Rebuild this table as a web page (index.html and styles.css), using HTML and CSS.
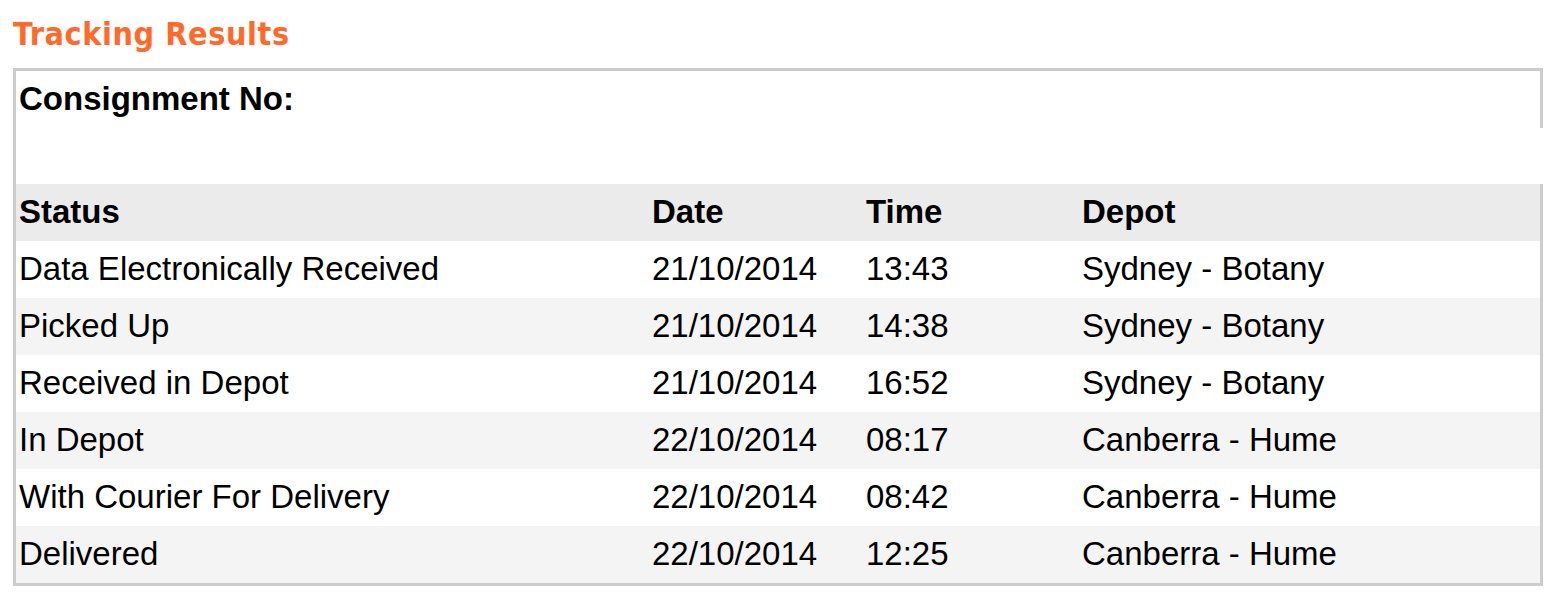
FILE: index.html
```html
<!DOCTYPE html>
<html>
<head>
<meta charset="utf-8">
<link rel="stylesheet" href="styles.css">
</head>
<body>
<h1 class="title">Tracking Results</h1>
<div class="panel">
  <div class="consignment">Consignment No:</div>
  <div class="spacer"></div>
  <div class="table">
    <div class="row head"><span>Status</span><span>Date</span><span>Time</span><span>Depot</span></div>
    <div class="row"><span>Data Electronically Received</span><span>21/10/2014</span><span>13:43</span><span>Sydney - Botany</span></div>
    <div class="row alt"><span>Picked Up</span><span>21/10/2014</span><span>14:38</span><span>Sydney - Botany</span></div>
    <div class="row"><span>Received in Depot</span><span>21/10/2014</span><span>16:52</span><span>Sydney - Botany</span></div>
    <div class="row alt"><span>In Depot</span><span>22/10/2014</span><span>08:17</span><span>Canberra - Hume</span></div>
    <div class="row"><span>With Courier For Delivery</span><span>22/10/2014</span><span>08:42</span><span>Canberra - Hume</span></div>
    <div class="row alt"><span>Delivered</span><span>22/10/2014</span><span>12:25</span><span>Canberra - Hume</span></div>
  </div>
</div>
</body>
</html>
```
FILE: styles.css
```css
html, body {
  margin: 0;
  padding: 0;
  background: #ffffff;
}
body {
  padding: 0 0 0 13px;
  font-family: "Liberation Sans", Arial, sans-serif;
  color: #000;
}
.title {
  margin: 0;
  height: 68px;
  box-sizing: border-box;
  padding-top: 13px;
  font-family: "DejaVu Sans Condensed", "DejaVu Sans", sans-serif;
  font-weight: bold;
  font-size: 32px;
  letter-spacing: 0.6px;
  line-height: 42px;
  color: #ff6a2b;
}
.panel {
  width: 1530px;
  box-sizing: border-box;
  border-left: 3px solid #cccccc;
  border-bottom: 3px solid #cccccc;
}
.consignment {
  border-top: 3px solid #cccccc;
  border-right: 3px solid #cccccc;
  height: 56px;
  box-sizing: content-box;
  display: flex;
  align-items: center;
  padding-left: 3px;
  padding-bottom: 1px;
  margin-bottom: -1px;
  font-weight: bold;
  font-size: 33px;
}
.spacer {
  height: 57px;
}
.table {
  border-right: 3px solid #cccccc;
}
.row {
  display: grid;
  grid-template-columns: 633px 214px 216px 1fr;
  height: 57px;
  box-sizing: border-box;
  padding-bottom: 2px;
  align-items: center;
  font-size: 33px;
  background: #ffffff;
}
.row span {
  padding-left: 3px;
  white-space: nowrap;
}
.row.head {
  background: #ebebeb;
  font-weight: bold;
}
.row.alt {
  background: #f4f4f4;
}
```
